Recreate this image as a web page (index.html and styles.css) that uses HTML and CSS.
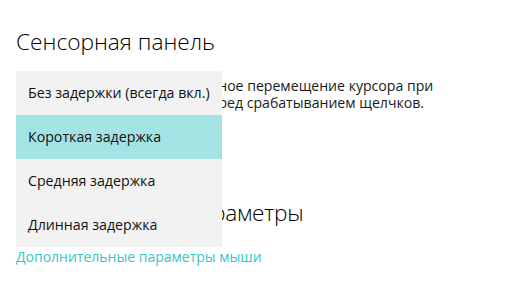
FILE: index.html
```html
<!DOCTYPE html>
<html lang="ru">
<head>
<meta charset="utf-8">
<link rel="stylesheet" href="styles.css">
</head>
<body>
<div class="page">
  <h1 class="title">Сенсорная панель</h1>
  <p class="desc">Чтобы предотвратить случайное перемещение курсора при<br>вводе, измените задержку перед срабатыванием щелчков.</p>
  <div class="combo">Короткая задержка</div>
  <h2 class="title sub">Сопутствующие параметры</h2>
  <a class="link" href="#">Дополнительные параметры мыши</a>

  <ul class="menu">
    <li class="item">Без задержки (всегда вкл.)</li>
    <li class="item selected">Короткая задержка</li>
    <li class="item">Средняя задержка</li>
    <li class="item">Длинная задержка</li>
  </ul>
</div>
</body>
</html>
```
FILE: styles.css
```css
html, body {
  margin: 0;
  padding: 0;
  background: #ffffff;
}
body {
  font-family: "Open Sans", "Noto Sans", sans-serif;
  color: #1a1a1a;
  width: 514px;
  height: 299px;
  overflow: hidden;
}
.page {
  position: relative;
  padding: 26px 16px 0 16px;
  display: flex;
  flex-direction: column;
  align-items: flex-start;
}
.title {
  margin: 0;
  font-size: 22.7px;
  font-weight: 300;
  line-height: 32px;
  color: #000;
}
.desc {
  margin: 19px 0 0 0;
  font-size: 14.1px;
  line-height: 17px;
  white-space: nowrap;
}
.combo {
  margin-top: 14px;
  height: 32px;
  width: 206px;
  visibility: hidden;
}
.sub {
  margin-top: 40px;
  letter-spacing: -0.3px;
}
.link {
  margin-top: 18px;
  font-size: 14px;
  line-height: 20px;
  color: #33c7c7;
  text-decoration: none;
}
.menu {
  position: absolute;
  left: 16px;
  top: 71px;
  width: 206px;
  margin: 0;
  padding: 0;
  list-style: none;
  background: #f2f2f2;
}
.item {
  height: 44px;
  line-height: 44px;
  padding-left: 12px;
  font-size: 14.2px;
  color: #111;
}
.item.selected {
  background: #a3e3e3;
}
```
